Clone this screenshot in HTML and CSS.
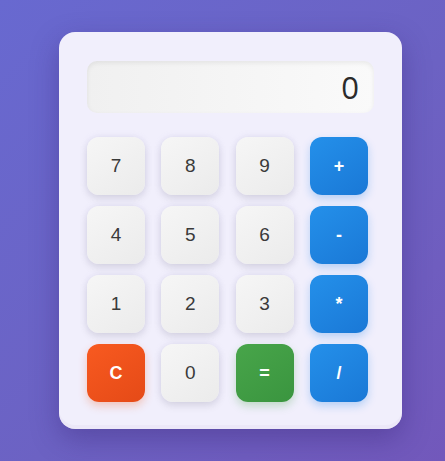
FILE: index.html
```html
<!DOCTYPE html>
<html lang="en">
<head>
<meta charset="utf-8">
<title>Calculator</title>
<link rel="stylesheet" href="styles.css">
</head>
<body>
  <div class="calculator">
    <div class="display">0</div>
    <div class="keys">
      <button class="key num">7</button>
      <button class="key num">8</button>
      <button class="key num">9</button>
      <button class="key op">+</button>
      <button class="key num">4</button>
      <button class="key num">5</button>
      <button class="key num">6</button>
      <button class="key op">-</button>
      <button class="key num">1</button>
      <button class="key num">2</button>
      <button class="key num">3</button>
      <button class="key op">*</button>
      <button class="key clear">C</button>
      <button class="key num">0</button>
      <button class="key equals">=</button>
      <button class="key op">/</button>
    </div>
  </div>
</body>
</html>
```

FILE: styles.css
```css
* { box-sizing: border-box; }

html, body {
  margin: 0;
  height: 100%;
}

body {
  display: flex;
  align-items: center;
  justify-content: center;
  padding-left: 16px;
  background: linear-gradient(135deg, #6869d0 0%, #6c62c3 55%, #7258bb 100%);
  font-family: "Liberation Sans", Arial, sans-serif;
}

.calculator {
  width: 343px;
  height: 397px;
  padding: 29px 28px 27px 28px;
  background: #f1effc;
  border-radius: 16px;
  box-shadow: 0 10px 28px rgba(50, 30, 110, 0.35), inset 0 -4px 0 rgba(225, 222, 242, 0.35);
}

.display {
  height: 52px;
  padding: 0 15px;
  display: flex;
  align-items: center;
  justify-content: flex-end;
  background: linear-gradient(90deg, #f0f0f0 0%, #fafafa 100%);
  border-radius: 10px;
  box-shadow: inset 0 2px 5px rgba(0, 0, 0, 0.07);
  font-family: "Open Sans", "Liberation Sans", sans-serif;
  font-size: 31px;
  color: #2b2b2b;
}

.keys {
  margin-top: 24px;
  display: grid;
  grid-template-columns: repeat(4, 58px);
  grid-auto-rows: 58px;
  column-gap: 16.3px;
  row-gap: 11px;
}

.key {
  border: none;
  border-radius: 12px;
  font-family: "Liberation Sans", Arial, sans-serif;
  font-size: 19px;
  padding: 0;
  display: flex;
  align-items: center;
  justify-content: center;
  cursor: pointer;
}

.num {
  color: #3a3a3a;
  background: linear-gradient(145deg, #f6f6f6 0%, #ebebeb 100%);
  box-shadow: 0 4px 8px rgba(0, 0, 0, 0.09), 0 0 6px rgba(180, 176, 220, 0.25);
}

.op {
  color: #fff;
  font-weight: bold;
  font-size: 18px;
  background: linear-gradient(145deg, #2490ea 0%, #1a78d6 100%);
  box-shadow: 0 4px 9px rgba(33, 130, 230, 0.28);
}

.clear {
  color: #fff;
  font-weight: bold;
  font-size: 18px;
  background: linear-gradient(145deg, #f85a20 0%, #e54a17 100%);
  box-shadow: 0 4px 9px rgba(240, 90, 30, 0.28);
}

.equals {
  color: #fff;
  font-weight: bold;
  font-size: 18px;
  background: linear-gradient(145deg, #48a54a 0%, #3a953f 100%);
  box-shadow: 0 4px 9px rgba(70, 160, 70, 0.28);
}
```
